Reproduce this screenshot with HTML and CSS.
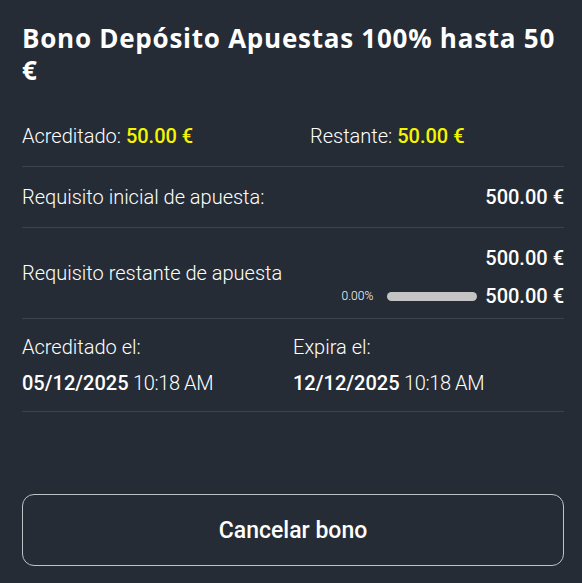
FILE: index.html
```html
<!DOCTYPE html>
<html>
<head>
    <title>Bono Depósito</title>
    <meta name="viewport" content="width=device-width, initial-scale=1.0">
    <link rel="stylesheet" href="styles.css">
</head>
<body>
    <div class="bonus">
        <h1 class="bonus-title">Bono Depósito Apuestas 100% hasta 50 €</h1>

        <div class="summary">
            <div class="summary-item">Acreditado: <span class="amount">50.00 €</span></div>
            <div class="summary-item">Restante: <span class="amount">50.00 €</span></div>
        </div>

        <div class="row">
            <span class="label">Requisito inicial de apuesta:</span>
            <span class="value">500.00 €</span>
        </div>

        <div class="row wager-row">
            <span class="label">Requisito restante de apuesta</span>
            <div class="wager">
                <span class="value">500.00 €</span>
                <div class="progress-line">
                    <span class="percent">0.00%</span>
                    <div class="bar"><div class="bar-fill" style="width: 0%"></div></div>
                    <span class="value">500.00 €</span>
                </div>
            </div>
        </div>

        <div class="row dates">
            <div class="date-col">
                <span class="label">Acreditado el:</span>
                <span class="date"><strong>05/12/2025</strong> 10:18 AM</span>
            </div>
            <div class="date-col">
                <span class="label">Expira el:</span>
                <span class="date"><strong>12/12/2025</strong> 10:18 AM</span>
            </div>
        </div>

        <button class="cancel">Cancelar bono</button>
    </div>
</body>
</html>
```

FILE: styles.css
```css
/* Bonus detail panel */
body {
    margin: 0;
    background: #252c35;
    color: #fff;
    font-family: 'Roboto', 'Liberation Sans', sans-serif;
}

.bonus {
    padding: 22px 18px 16px 22px;
    display: flex;
    flex-direction: column;
}

.bonus-title {
    margin: 0;
    font-family: 'Open Sans', 'Roboto', sans-serif;
    font-size: 26px;
    line-height: 32px;
    font-weight: 700;
    letter-spacing: 0.75px;
}

.summary {
    display: grid;
    grid-template-columns: 288px 1fr;
    margin-top: 38px;
    padding-bottom: 18px;
    border-bottom: 1px solid #3b434c;
    font-size: 20px;
    line-height: 24px;
    font-weight: 300;
}

.amount {
    color: #f5f500;
    font-weight: 500;
}

.row {
    display: flex;
    justify-content: space-between;
    align-items: center;
    padding: 18px 0;
    border-bottom: 1px solid #3b434c;
    font-size: 20px;
    line-height: 24px;
}

.label {
    font-weight: 300;
}

.value {
    font-weight: 500;
}

.wager-row {
    padding: 18px 0 10px;
}

.wager-row .label {
    margin-bottom: 9px;
}

.wager {
    display: flex;
    flex-direction: column;
    align-items: flex-end;
    gap: 14px;
}

.progress-line {
    display: flex;
    align-items: center;
}

.percent {
    font-size: 12px;
    font-weight: 300;
}

.bar {
    width: 90px;
    height: 9px;
    margin: 1px 8px 0 14px;
    background: #c4c4c4;
    border-radius: 5px;
    overflow: hidden;
}

.bar-fill {
    height: 100%;
    background: #f5f500;
}

.dates {
    display: grid;
    grid-template-columns: 271px 1fr;
    padding: 16px 0;
}

.date-col {
    display: flex;
    flex-direction: column;
    gap: 12px;
}

.date {
    font-weight: 300;
    letter-spacing: -0.4px;
}

.date strong {
    font-weight: 500;
    letter-spacing: 0;
}

.cancel {
    margin-top: 82px;
    height: 72px;
    background: transparent;
    color: #fff;
    border: 1px solid #bfc3c7;
    border-radius: 12px;
    font-family: inherit;
    font-size: 23px;
    font-weight: 500;
    cursor: pointer;
}
```
